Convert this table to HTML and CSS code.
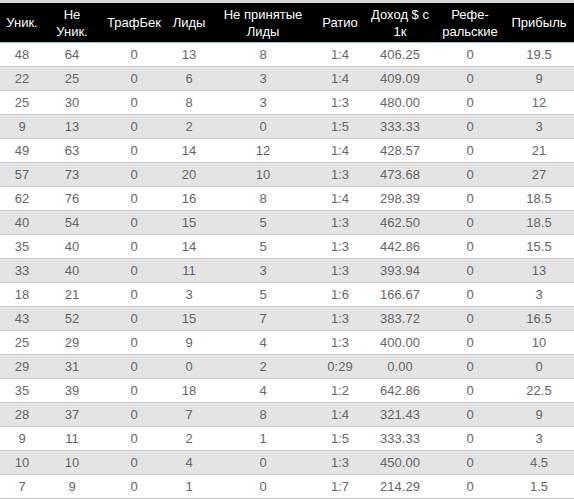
FILE: index.html
```html
<!DOCTYPE html>
<html lang="ru">
<head>
<meta charset="utf-8">
<title>Статистика</title>
<link rel="stylesheet" href="styles.css">
</head>
<body>
<div class="wrap">
<table class="stats">
<colgroup>
<col class="c1"><col class="c2"><col class="c3"><col class="c4"><col class="c5"><col class="c6"><col class="c7"><col class="c8"><col class="c9">
</colgroup>
<thead>
<tr><th>Уник.</th><th>Не<br>Уник.</th><th>ТрафБек</th><th>Лиды</th><th>Не принятые<br>Лиды</th><th>Ратио</th><th>Доход $ с<br>1к</th><th>Рефе-<br>ральские</th><th>Прибыль</th></tr>
</thead>
<tbody>
<tr><td>48</td><td>64</td><td>0</td><td>13</td><td>8</td><td>1:4</td><td>406.25</td><td>0</td><td>19.5</td></tr>
<tr><td>22</td><td>25</td><td>0</td><td>6</td><td>3</td><td>1:4</td><td>409.09</td><td>0</td><td>9</td></tr>
<tr><td>25</td><td>30</td><td>0</td><td>8</td><td>3</td><td>1:3</td><td>480.00</td><td>0</td><td>12</td></tr>
<tr><td>9</td><td>13</td><td>0</td><td>2</td><td>0</td><td>1:5</td><td>333.33</td><td>0</td><td>3</td></tr>
<tr><td>49</td><td>63</td><td>0</td><td>14</td><td>12</td><td>1:4</td><td>428.57</td><td>0</td><td>21</td></tr>
<tr><td>57</td><td>73</td><td>0</td><td>20</td><td>10</td><td>1:3</td><td>473.68</td><td>0</td><td>27</td></tr>
<tr><td>62</td><td>76</td><td>0</td><td>16</td><td>8</td><td>1:4</td><td>298.39</td><td>0</td><td>18.5</td></tr>
<tr><td>40</td><td>54</td><td>0</td><td>15</td><td>5</td><td>1:3</td><td>462.50</td><td>0</td><td>18.5</td></tr>
<tr><td>35</td><td>40</td><td>0</td><td>14</td><td>5</td><td>1:3</td><td>442.86</td><td>0</td><td>15.5</td></tr>
<tr><td>33</td><td>40</td><td>0</td><td>11</td><td>3</td><td>1:3</td><td>393.94</td><td>0</td><td>13</td></tr>
<tr><td>18</td><td>21</td><td>0</td><td>3</td><td>5</td><td>1:6</td><td>166.67</td><td>0</td><td>3</td></tr>
<tr><td>43</td><td>52</td><td>0</td><td>15</td><td>7</td><td>1:3</td><td>383.72</td><td>0</td><td>16.5</td></tr>
<tr><td>25</td><td>29</td><td>0</td><td>9</td><td>4</td><td>1:3</td><td>400.00</td><td>0</td><td>10</td></tr>
<tr><td>29</td><td>31</td><td>0</td><td>0</td><td>2</td><td>0:29</td><td>0.00</td><td>0</td><td>0</td></tr>
<tr><td>35</td><td>39</td><td>0</td><td>18</td><td>4</td><td>1:2</td><td>642.86</td><td>0</td><td>22.5</td></tr>
<tr><td>28</td><td>37</td><td>0</td><td>7</td><td>8</td><td>1:4</td><td>321.43</td><td>0</td><td>9</td></tr>
<tr><td>9</td><td>11</td><td>0</td><td>2</td><td>1</td><td>1:5</td><td>333.33</td><td>0</td><td>3</td></tr>
<tr><td>10</td><td>10</td><td>0</td><td>4</td><td>0</td><td>1:3</td><td>450.00</td><td>0</td><td>4.5</td></tr>
<tr><td>7</td><td>9</td><td>0</td><td>1</td><td>0</td><td>1:7</td><td>214.29</td><td>0</td><td>1.5</td></tr>
</tbody>
</table>
</div>
</body>
</html>
```

FILE: styles.css
```css
html, body {
  margin: 0;
  padding: 0;
  background: #ffffff;
}
.wrap {
  border-top: 3px solid #dadada;
  width: 574px;
}
.stats {
  width: 574px;
  table-layout: fixed;
  border-collapse: collapse;
  font-family: "Liberation Sans", Arial, sans-serif;
  font-size: 13px;
}
.c1 { width: 44px; }
.c2 { width: 56px; }
.c3 { width: 68px; }
.c4 { width: 42px; }
.c5 { width: 106px; }
.c6 { width: 48px; }
.c7 { width: 72px; }
.c8 { width: 68px; }
.c9 { width: 70px; }
.stats th {
  background: #000000;
  color: #ffffff;
  font-weight: normal;
  line-height: 17px;
  height: 39px;
  padding: 0;
  text-align: center;
  vertical-align: middle;
  border-bottom: 1px solid #9fbfd6;
  white-space: nowrap;
}
.stats td {
  color: #666666;
  text-align: center;
  height: 23px;
  padding: 0;
  line-height: 15px;
  border-bottom: 1px solid #c9c9c9;
}
.stats tbody tr:nth-child(even) td {
  background: #e4e4e4;
}
```
